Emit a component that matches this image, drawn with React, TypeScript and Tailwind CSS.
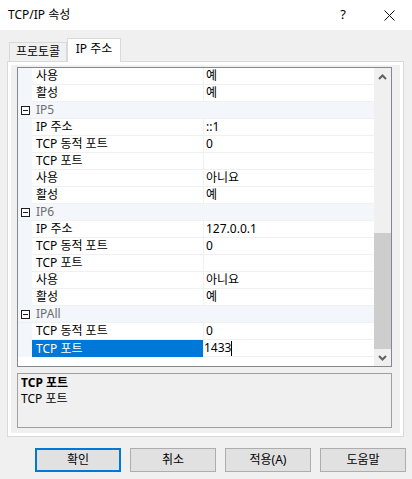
import React from "react";

type Row =
  | { kind: "cat"; label: string }
  | { kind: "prop"; name: string; value: string; selected?: boolean };

const rows: Row[] = [
  { kind: "prop", name: "사용", value: "예" },
  { kind: "prop", name: "활성", value: "예" },
  { kind: "cat", label: "IP5" },
  { kind: "prop", name: "IP 주소", value: "::1" },
  { kind: "prop", name: "TCP 동적 포트", value: "0" },
  { kind: "prop", name: "TCP 포트", value: "" },
  { kind: "prop", name: "사용", value: "아니요" },
  { kind: "prop", name: "활성", value: "예" },
  { kind: "cat", label: "IP6" },
  { kind: "prop", name: "IP 주소", value: "127.0.0.1" },
  { kind: "prop", name: "TCP 동적 포트", value: "0" },
  { kind: "prop", name: "TCP 포트", value: "" },
  { kind: "prop", name: "사용", value: "아니요" },
  { kind: "prop", name: "활성", value: "예" },
  { kind: "cat", label: "IPAll" },
  { kind: "prop", name: "TCP 동적 포트", value: "0" },
  { kind: "prop", name: "TCP 포트", value: "1433", selected: true },
];

function Collapse() {
  return (
    <svg width="9" height="9" viewBox="0 0 9 9" className="block">
      <rect x="0.5" y="0.5" width="8" height="8" fill="white" stroke="#1e1e1e" />
      <path d="M2 4.5h5" stroke="#1e1e1e" />
    </svg>
  );
}

function Chevron({ up }: { up?: boolean }) {
  return (
    <svg width="9" height="6" viewBox="0 0 9 6" className="block">
      <path
        d={up ? "M1 5L4.5 1.5L8 5" : "M1 1L4.5 4.5L8 1"}
        fill="none"
        stroke="#606060"
        strokeWidth="2"
      />
    </svg>
  );
}

function GridRow({ row }: { row: Row }) {
  if (row.kind === "cat") {
    return (
      <div className="flex h-[17px] bg-[#f3f6fb] border-b border-[#f0f0f0]">
        <div className="w-[14px] flex items-center justify-center pl-[1px]">
          <Collapse />
        </div>
        <div className="pl-[4px] leading-[16px] text-[#6d6d6d]">{row.label}</div>
      </div>
    );
  }
  return (
    <div className="flex h-[17px]">
      <div className="w-[14px] bg-[#f3f6fb]" />
      <div
        className={
          row.selected
            ? "w-[171px] pl-[4px] leading-[17px] bg-[#0078d7] text-white"
            : "w-[171px] pl-[4px] leading-[16px] border-b border-[#f0f0f0]"
        }
      >
        {row.name}
      </div>
      <div className="w-px bg-[#f0f0f0]" />
      {row.selected ? (
        <div className="w-[170px] flex items-center border-b border-[#f0f0f0]">
          <span className="leading-[16px]">{row.value}</span>
          <span className="w-px h-[15px] bg-black" />
        </div>
      ) : (
        <div className="w-[170px] pl-[2px] leading-[16px] border-b border-[#f0f0f0]">
          {row.value}
        </div>
      )}
    </div>
  );
}

export default function App() {
  return (
    <div className="w-[412px] h-[479px] overflow-hidden bg-[#f0f0f0] text-[12px] text-black font-['Noto_Sans','Noto_Sans_CJK_KR',sans-serif]">
      {/* title bar */}
      <div className="h-[30px] bg-white flex items-center">
        <div className="pl-[8px] flex-1">TCP/IP 속성</div>
        <div className="w-[46px] text-center text-[13px]">?</div>
        <div className="w-[46px] flex justify-center">
          <svg width="11" height="11" viewBox="0 0 11 11">
            <path d="M0.5 0.5L10.5 10.5M10.5 0.5L0.5 10.5" stroke="#111" />
          </svg>
        </div>
      </div>

      {/* tabs */}
      <div className="flex items-end h-[31px] pl-[9px]">
        <div className="h-[19px] w-[58px] border border-b-0 border-[#d9d9d9] text-center leading-[18px]">
          프로토콜
        </div>
        <div className="relative z-10 -mb-px h-[24px] w-[54px] bg-white border border-b-0 border-[#d9d9d9] text-center leading-[20px]">
          IP 주소
        </div>
      </div>

      {/* tab page */}
      <div className="ml-[7px] w-[397px] h-[376px] border border-[#d9d9d9] bg-white p-[3px]">
        <div className="h-full bg-[#f0f0f0] pl-[6px] pt-[2px]">
          <div className="w-[375px] h-[300px] border border-[#828790] bg-white flex">
            <div className="w-[356px] flex flex-col">
              {rows.map((r, i) => (
                <GridRow key={i} row={r} />
              ))}
            </div>
            <div className="w-[17px] bg-[#f0f0f0] flex flex-col">
              <div className="h-[17px] flex items-center justify-center">
                <Chevron up />
              </div>
              <div className="h-[148px]" />
              <div className="h-[116px] bg-[#cdcdcd]" />
              <div className="flex-1 flex items-center justify-center">
                <Chevron />
              </div>
            </div>
          </div>

          {/* description */}
          <div className="mt-[6px] w-[375px] h-[55px] border border-[#a0a0a0] px-[3px] pt-px leading-[16px]">
            <div className="font-bold">TCP 포트</div>
            <div>TCP 포트</div>
          </div>
        </div>
      </div>

      {/* buttons */}
      <div className="mt-[11px] pl-[35px] flex gap-[9px]">
        <button className="w-[86px] h-[24px] bg-[#e1e1e1] border-2 border-[#0078d7]">확인</button>
        <button className="w-[86px] h-[24px] bg-[#e1e1e1] border border-[#adadad]">취소</button>
        <button className="w-[86px] h-[24px] bg-[#e1e1e1] border border-[#adadad]">적용(A)</button>
        <button className="w-[86px] h-[24px] bg-[#e1e1e1] border border-[#adadad]">도움말</button>
      </div>
    </div>
  );
}
